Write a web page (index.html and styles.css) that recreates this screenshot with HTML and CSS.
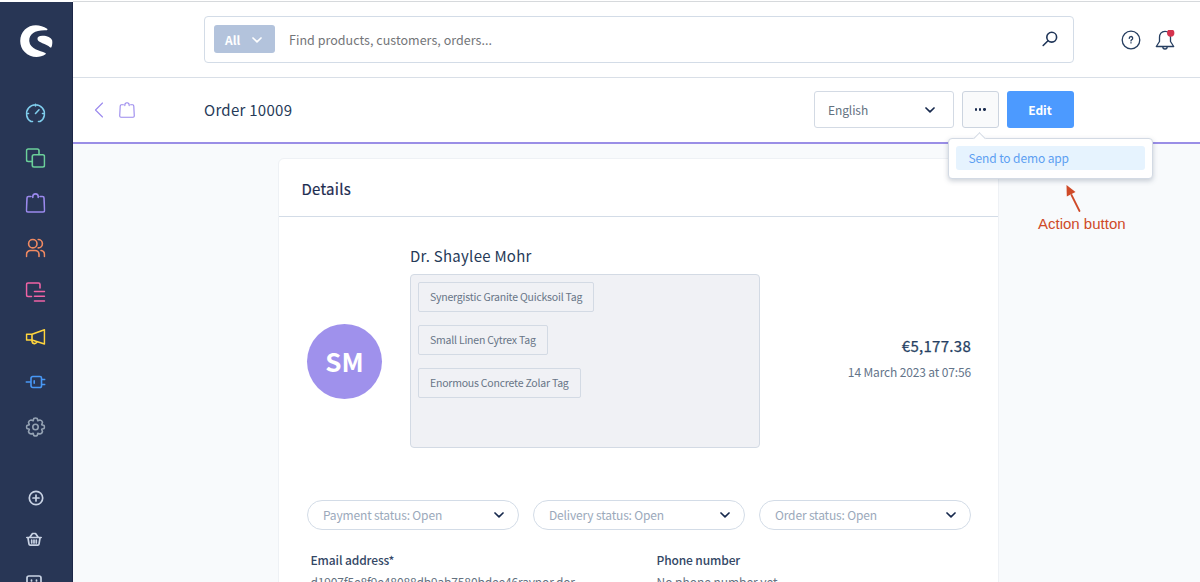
FILE: index.html
```html
<!DOCTYPE html>
<html lang="en">
<head>
<meta charset="utf-8">
<title>Order 10009</title>
<link rel="stylesheet" href="styles.css">
</head>
<body>
<div class="app">
  <aside class="sidebar">
    <svg class="logo" viewBox="0 0 34 34"><path fill="#fff" d="M27.6 4.8C20.800 .1 11.200 -.3 5.400 5.600C-.8 11.800 -.8 21.800 5.200 28C10.800 33.800 19.800 34.500 26 30.200C26.600 29.700 26.400 29.200 25.800 28.900C20.500 26.600 10.400 25 9.800 17.200C9.300 10 15.500 5.700 27.200 6.300C28 6.300 28.200 5.300 27.600 4.800Z"/><path fill="#fff" d="M32.700 16.500C31.800 13.200 27.300 11.600 22.800 11.700C19.400 11.800 17.600 13.100 18 15.300C18.500 18.600 26.500 19.700 30.700 23.400C31.200 23.800 31.800 23.600 32 23C32.800 20.800 33 18.800 32.700 16.500Z"/></svg>
    <nav class="menu">
      <svg class="ico cyan" viewBox="0 0 20 20"><path d="M7 18.500H5.500A9 9 0 1 1 14.500 18.500H13M10 1.200V3M1.200 10.500H3M17 10.500H18.800M10 10.500L13.500 6.800"/></svg>
      <svg class="ico green" viewBox="0 0 20 20"><path d="M6.500 13.500H2.700A1.700 1.700 0 0 1 1 11.800V2.700A1.700 1.700 0 0 1 2.700 1H11.800A1.700 1.700 0 0 1 13.500 2.700V6.500"/><rect x="6.800" y="6.800" width="12.200" height="12.200" rx="1.700"/></svg>
      <svg class="ico purple" viewBox="0 0 20 20"><path d="M5.500 3.500H3A1.500 1.500 0 0 0 1.500 5L.9 17.500A1.500 1.500 0 0 0 2.400 19H17.600A1.500 1.500 0 0 0 19.100 17.500L18.500 5A1.500 1.500 0 0 0 17 3.500H14.500M7.300 4.500V3.600A2.700 2.700 0 0 1 12.700 3.600V4.500"/></svg>
      <svg class="ico orange" viewBox="0 0 20 20"><circle cx="7.300" cy="5.700" r="4.200"/><path d="M1 18.500V16.500A4 4 0 0 1 5 12.500H9.500A4 4 0 0 1 13.500 16.500V18.500M12.700 1.500A4.200 4.200 0 0 1 12.700 9.900M15.500 12.500A4 4 0 0 1 19 16.500V18.500"/></svg>
      <svg class="ico pink" viewBox="0 0 20 20"><path d="M6 14.500H2.500A1.500 1.500 0 0 1 1 13V2.500A1.500 1.500 0 0 1 2.500 1H13A1.500 1.500 0 0 1 14.500 2.500V6M9 9.500H19M9 14.200H19M9 19H19"/></svg>
      <svg class="ico yellow" viewBox="0 0 20 20"><path d="M1 7.200H6.500V13H1ZM6.500 7.200L19 2.700V17L6.500 13M6.500 13.200V14.500A2.500 2.500 0 0 0 11.300 15"/></svg>
      <svg class="ico blue" viewBox="0 0 20 20"><path d="M.5 10H5.500M7 4.500H14.500A1.500 1.500 0 0 1 16 6V14A1.500 1.500 0 0 1 14.500 15.500H7.500A2 2 0 0 1 5.500 13.500V6.500A2 2 0 0 1 7.500 4.500M16 7.500H19.500M16 12.500H19.500M8.700 8.800V11.200"/></svg>
      <svg class="ico grey" viewBox="0 0 20 20"><circle cx="10" cy="10" r="2.700"/><path d="M8.300 1.500Q10 .5 11.700 1.500L12.300 3.800L14.500 3Q16.500 3.300 17 5.200L16.200 7.700L18.500 8.500Q19.500 10 18.500 11.500L16.200 12.300L17 14.800Q16.500 16.700 14.500 17L12.300 16.200L11.700 18.500Q10 19.500 8.300 18.500L7.700 16.200L5.500 17Q3.500 16.700 3 14.800L3.800 12.300L1.500 11.500Q.5 10 1.500 8.500L3.800 7.700L3 5.200Q3.500 3.300 5.500 3L7.700 3.800Z"/></svg>
    </nav>
    <nav class="extra">
      <svg class="sm" viewBox="0 0 16 16"><circle cx="8" cy="8" r="6.700"/><path d="M8 5V11M5 8H11"/></svg>
      <svg class="sm basket" viewBox="0 0 16 16"><path d="M.8 6.500H15.200M2 7L3 13.200A1.200 1.200 0 0 0 4.200 14.200H11.800A1.200 1.200 0 0 0 13 13.200L14 7M4 6L6.500 2.500H9.500L12 6M5.700 9V12M8 9V12M10.300 9V12"/></svg>
      <svg class="sm basket" viewBox="0 0 16 16"><rect x="1" y="4" width="14" height="11" rx="2"/><path d="M5.500 8V9M10.500 8V9M5 12H11"/></svg>
    </nav>
  </aside>
  <div class="main">
    <header class="topbar">
      <div class="search">
        <button class="scope">All <svg class="chev" viewBox="0 0 10 6"><path d="M1 1L5 4.800L9 1"/></svg></button>
        <span class="placeholder">Find products, customers, orders...</span>
        <svg class="glass" viewBox="0 0 16 16"><circle cx="9.700" cy="6.200" r="4.900"/><path d="M6 9.800L1.200 14.500"/></svg>
      </div>
      <div class="tools">
        <svg class="help" viewBox="0 0 20 20"><circle cx="10" cy="10" r="8.800"/><path class="q" d="M8.300 8.400A1.700 1.700 0 1 1 10.600 9.800Q10 10.100 10 10.900M10 12.700V12.900"/></svg>
        <svg class="bell" viewBox="0 0 20 20"><path d="M10 1.400C6.300 1.400 4.500 4.200 4.500 7.300V11.500L1.300 16.500H18.700L15.500 11.500V7.300C15.500 4.200 13.700 1.400 10 1.400ZM7.800 16.800A2.200 2.200 0 0 0 12.200 16.800"/><circle class="dot" cx="15.700" cy="3" r="3.700"/></svg>
      </div>
    </header>
    <div class="smartbar">
      <div class="back">
        <svg class="arrow" viewBox="0 0 10 16"><path d="M8.500 1L1.500 8L8.500 15"/></svg>
        <svg class="bag" viewBox="0 0 20 20"><path d="M5.500 3.500H3A1.500 1.500 0 0 0 1.500 5L.9 17.500A1.500 1.500 0 0 0 2.400 19H17.600A1.500 1.500 0 0 0 19.100 17.500L18.500 5A1.500 1.500 0 0 0 17 3.500H14.500M7.300 4.500V3.600A2.700 2.700 0 0 1 12.700 3.600V4.500"/></svg>
      </div>
      <h1 class="title">Order 10009</h1>
      <div class="actions">
        <div class="select"><span>English</span><svg class="chev" viewBox="0 0 10 6"><path d="M1 1L5 4.800L9 1"/></svg></div>
        <div class="more"><i></i><i></i><i></i>
          <div class="popover"><div class="item">Send to demo app</div></div>
        </div>
        <button class="edit">Edit</button>
      </div>
    </div>
    <main class="content">
      <section class="card">
        <h2 class="card-title">Details</h2>
        <div class="customer">
          <div class="avatar">SM</div>
          <div class="who">
            <div class="name">Dr. Shaylee Mohr</div>
            <div class="tags">
              <span class="tag">Synergistic Granite Quicksoil Tag</span>
              <span class="tag">Small Linen Cytrex Tag</span>
              <span class="tag">Enormous Concrete Zolar Tag</span>
            </div>
          </div>
          <div class="total">
            <div class="price">€5,177.38</div>
            <div class="date">14 March 2023 at 07:56</div>
          </div>
        </div>
        <div class="states">
          <div class="pill"><span>Payment status: Open</span><svg class="chev" viewBox="0 0 10 6"><path d="M1 1L5 4.800L9 1"/></svg></div>
          <div class="pill"><span>Delivery status: Open</span><svg class="chev" viewBox="0 0 10 6"><path d="M1 1L5 4.800L9 1"/></svg></div>
          <div class="pill"><span>Order status: Open</span><svg class="chev" viewBox="0 0 10 6"><path d="M1 1L5 4.800L9 1"/></svg></div>
        </div>
        <dl class="facts">
          <div><dt>Email address*</dt><dd class="mail">d1907f5e8f9e48088db9ab7580bdee46raynor.dor</dd></div>
          <div><dt>Phone number</dt><dd>No phone number yet</dd></div>
        </dl>
      </section>
      <div class="note">
        <svg class="note-arrow" viewBox="0 0 18 28"><path class="shaft" d="M14.500 26L6.500 10"/><path class="head" d="M1.500 0L10.500 7L1.800 11.500Z"/></svg>
        <span>Action button</span>
      </div>
    </main>
  </div>
</div>
</body>
</html>
```
FILE: styles.css
```css
* { box-sizing: border-box; }
body { margin: 0; height: 582px; overflow: hidden; background: #fff; font-family: "Noto Sans CJK SC", "Noto Sans", sans-serif; font-size: 12px; line-height: 20px; color: #52667a; }
svg { display: block; flex: none; fill: none; stroke-linecap: round; stroke-linejoin: round; }
button { border: 0; padding: 0; font: inherit; }
.app { display: flex; height: 582px; border-top: 1px solid #fff; }
.sidebar { width: 73px; flex: none; margin-top: 1px; background: #283655; overflow: hidden; border-right: 1px solid #1d2748; }
.logo { width: 34px; height: 34px; margin: 22px 0 0 18.500px; }
.logo path { stroke: none; transform: translateX(.5px); }
.menu { display: flex; flex-direction: column; gap: 24.860px; padding: 45px 0 0 25.500px; }
.ico { width: 20px; height: 20px; stroke-width: 1.600; transform: translateX(-.5px); }
.cyan { stroke: #7fcdec; }
.green { stroke: #6bd09a; }
.purple { stroke: #9a89ed; }
.orange { stroke: #f08a62; }
.pink { stroke: #f063a5; }
.yellow { stroke: #ffd53d; }
.blue { stroke: #4898f5; }
.grey { stroke: #94a2b3; }
.extra { display: flex; flex-direction: column; gap: 25.500px; padding: 53px 0 0 27.500px; }
.sm { width: 16px; height: 16px; stroke: #c9d3e4; stroke-width: 1.700; }
.basket { transform: translate(-2px, -1px); }
.main { flex: 1; min-width: 0; display: flex; flex-direction: column; border-top: 1px solid #d6d9dc; }
.topbar { height: 76px; flex: none; display: flex; align-items: center; padding-left: 131px; border-bottom: 1px solid #d9dfe7; }
.search { width: 870px; height: 47px; display: flex; align-items: center; border: 1px solid #d3dce7; border-radius: 4px; padding: 0 15px 1px 9px; }
.scope { width: 61px; height: 28px; display: flex; align-items: center; justify-content: space-between; padding: 1px 13px 0 11px; border-radius: 3px; background: #b3c3dc; color: #fff; font-weight: 700; }
.chev { width: 10px; height: 6px; stroke: #17294d; stroke-width: 1.700; }
.scope .chev { stroke: #fff; }
.placeholder { flex: 1; padding-top: 1px; margin-left: 14px; color: #737578; font-size: 12.500px; letter-spacing: .03px; }
.glass { width: 16px; height: 16px; stroke: #1f3558; stroke-width: 1.600; }
.tools { display: flex; gap: 14px; margin-left: 47px; padding-top: 1px; }
.help, .bell { width: 20px; height: 20px; stroke: #263e60; stroke-width: 1.300; }
.bell .dot { fill: #d5334e; stroke: none; }
.smartbar { height: 66px; flex: none; display: flex; align-items: center; padding: 0 0 1px 21px; border-bottom: 2px solid #9a8ee6; }
.back { width: 110px; display: flex; align-items: center; gap: 15px; stroke: #9a89ed; }
.arrow { width: 10px; height: 16px; stroke-width: 1.100; }
.bag { width: 16px; height: 16px; stroke-width: 1.400; }
.title { margin: 0; width: 610px; font-size: 15px; font-weight: 400; letter-spacing: .28px; color: #263a58; }
.actions { display: flex; gap: 7.500px; }
.select { width: 140px; height: 37px; display: flex; align-items: center; justify-content: space-between; padding: 0 18px 0 13px; border: 1px solid #d3dae4; border-radius: 3px; color: #64717f; }
.select span { letter-spacing: -.1px; }
.more { position: relative; width: 37.500px; height: 37px; display: flex; align-items: center; justify-content: center; gap: 2px; border: 1px solid #ccd4df; border-radius: 3px; background: #f9fafb; }
.more i { width: 2.300px; height: 2.300px; border-radius: 50%; background: #17294d; }
.edit { width: 67px; height: 37px; border-radius: 3px; background: #4c9aff; color: #fff; font-weight: 700; }
.popover { position: absolute; z-index: 2; left: -15px; top: 46px; width: 205px; height: 41px; padding: 7px; background: #fff; border: 1px solid #d3dae4; border-radius: 4px; box-shadow: 0 2px 5px rgba(50,70,100,.25); }
.popover::before { content: ""; position: absolute; left: 26px; top: -5px; width: 8px; height: 8px; transform: rotate(45deg); background: #fff; border: 1px solid #d3dae4; border-width: 1px 0 0 1px; }
.item { height: 24px; line-height: 24px; padding-left: 13px; border-radius: 3px; background: #e6f3fe; color: #5d9ff2; letter-spacing: -.12px; }
.content { flex: 1; display: flex; align-items: flex-start; background: #f8fafc; padding: 14px 0 0 205px; }
.card { width: 721px; height: 440px; flex: none; background: #fff; border: 1px solid #eef1f5; border-radius: 6px 6px 0 0; }
.card-title { height: 58px; margin: 0; padding-left: 22.500px; line-height: 60px; border-bottom: 1px solid #d3dce7; font-size: 15px; font-weight: 400; letter-spacing: .28px; -webkit-text-stroke: .2px currentColor; color: #1d2c50; }
.customer { height: 283px; display: flex; padding: 28px 27px 0 28px; }
.avatar { width: 75px; height: 75px; margin: 79px 28px 0 0; flex: none; border-radius: 50%; background: #9f91ec; color: #fff; font-size: 26px; font-weight: 700; line-height: 74px; text-align: center; }
.name { padding-top: 1px; font-size: 15px; letter-spacing: .26px; color: #263a58; margin-bottom: 8px; }
.tags { width: 350px; height: 174px; display: flex; flex-direction: column; align-items: flex-start; gap: 13px; padding: 7px; background: #f0f1f5; border: 1px solid #d3dae4; border-radius: 4px; }
.tag { height: 30px; padding: 0 11px; line-height: 28px; border: 1px solid #d3dae4; border-radius: 2px; font-size: 10.500px; letter-spacing: -.21px; color: #687587; }
.total { flex: 1; padding-top: 91px; text-align: right; white-space: nowrap; }
.price { font-size: 15px; letter-spacing: .28px; -webkit-text-stroke: .25px currentColor; color: #263f63; }
.date { margin-top: 6px; letter-spacing: -.14px; color: #64748a; }
.states { display: flex; gap: 14px; padding-left: 28px; }
.pill { width: 212px; height: 30px; display: flex; align-items: center; justify-content: space-between; padding: 0 14px 0 15px; border: 1px solid #d3dce7; border-radius: 15px; letter-spacing: -.16px; color: #9ba9bb; }
.facts { display: flex; margin: 20px 0 0 31.500px; }
.facts > div { width: 346px; }
.facts > div:last-child { padding-left: 2px; }
.facts > div:first-child { flex: none; }
.facts dt { font-weight: 500; letter-spacing: -.12px; color: #334765; }
.facts dd { margin: 2px 0 0; letter-spacing: -.04px; color: #64717f; }
.facts > div:last-child { padding-left: 0; }
.facts .mail { letter-spacing: -.15px; }
.note { margin: 27px 0 0 39px; color: #cf4a28; font: 15px/20px "Liberation Sans", Arial, sans-serif; }
.note-arrow { width: 18px; height: 28px; margin: 0 0 1px 27px; }
.shaft { stroke: #cf4a28; stroke-width: 1.800; }
.head { fill: #cf4a28; }
```
